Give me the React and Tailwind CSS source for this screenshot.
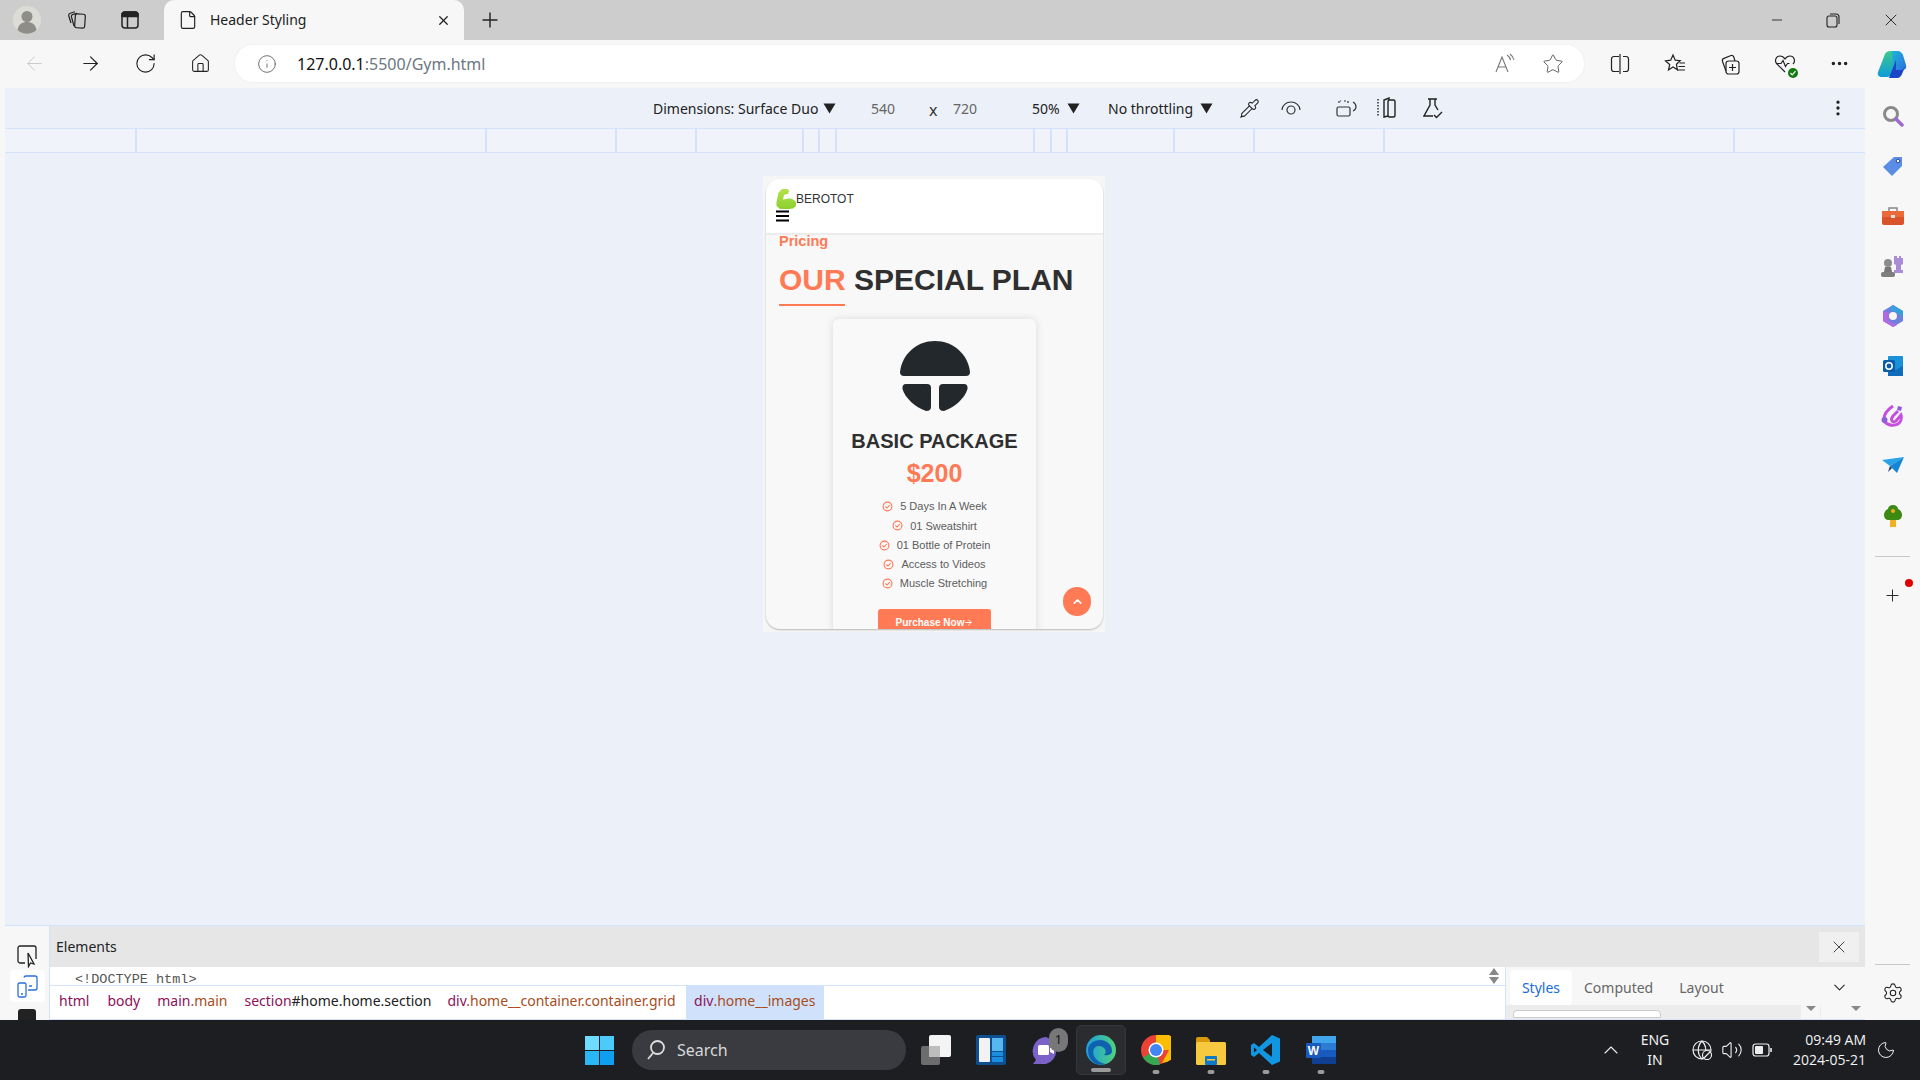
import React from "react";
import { File, X, Plus, ArrowLeft, ArrowRight, RotateCw, Home, Info, Star, MoreHorizontal, MoreVertical, Minus, ChevronDown, ChevronUp, Settings, Moon, Volume2, Pipette } from "lucide-react";

const Tri = ({ className = "" }) => (
  <svg width="13" height="11" viewBox="0 0 13 11" className={`shrink-0 ${className}`}><path d="M0.5 0.5H12.5L6.5 10.5Z" fill="#222" /></svg>
);

function Tabs() {
  return (
    <div className="h-[40px] bg-[#cdcdcd] flex items-end shrink-0">
      <div className="w-[54px] h-[40px] flex items-center justify-center">
        <svg width="28" height="28" viewBox="0 0 28 28"><circle cx="14" cy="14" r="14" fill="#dcdcd6" /><circle cx="14" cy="10.5" r="5.5" fill="#8f8d87" /><path d="M4.5 24c1-6 5-8 9.5-8s8.500 2 9.500 8a14 14 0 0 1-19 0Z" fill="#8f8d87" /></svg>
      </div>
      <div className="w-[46px] h-[40px] flex items-center justify-center">
        <svg width="22" height="22" viewBox="0 0 22 22" fill="none" stroke="#222" strokeWidth="1.2"><rect x="9" y="5" width="10" height="14" rx="2" transform="rotate(4 14 12)" /><path d="M8 17 5.500 8c-.4-1.300.3-2.300 1.500-2.600L11 4.300" /><path d="M5 14 2.800 7c-.4-1.300.2-2.300 1.500-2.700L9 2.800" /></svg>
      </div>
      <div className="w-[60px] h-[40px] flex items-center justify-center">
        <svg width="20" height="20" viewBox="0 0 20 20" fill="none" stroke="#222" strokeWidth="1.500"><rect x="2" y="2" width="16" height="16" rx="3" /><path d="M2 6.500V5a3 3 0 0 1 3-3h10a3 3 0 0 1 3 3v1.500Z" fill="#222" /><path d="M7.500 6v12" /></svg>
      </div>
      <div className="ml-[4px] w-[300px] h-[40px] bg-[#f7f7f7] rounded-t-[10px] flex items-center pl-[14px]">
        <File size={20} strokeWidth={1.4} color="#222" />
        <span className="ml-[12px] pb-[2px] text-[14px] text-[#222] font-['Noto_Sans',sans-serif]">Header Styling</span>
        <X size={15} strokeWidth={2} color="#222" className="ml-auto mr-[13px]" />
      </div>
      <div className="ml-[14px] w-[24px] h-[40px] flex items-center justify-center"><Plus size={24} strokeWidth={1.4} color="#222" /></div>
      <div className="ml-auto h-[40px] flex items-center">
        <Minus size={16} strokeWidth={1.3} color="#222" />
        <div className="ml-[40px]"><svg width="16" height="16" viewBox="0 0 16 16" fill="none" stroke="#222" strokeWidth="1.100"><rect x="2" y="4" width="10" height="11" rx="2" /><path d="M5 2h6a3 3 0 0 1 3 3v7" /></svg></div>
        <X size={20} strokeWidth={1.1} color="#222" className="ml-[40px] mr-[19px]" />
      </div>
    </div>
  );
}

function Toolbar() {
  return (
    <div className="h-[48px] bg-[#f7f7f7] flex items-center shrink-0 pb-[1px]">
      <div className="w-[235px] flex items-center pl-[23px] gap-[32.500px]">
        <ArrowLeft size={23} strokeWidth={1} color="#c8c8c8" />
        <ArrowRight size={23} strokeWidth={1.200} color="#222" />
        <RotateCw size={23} strokeWidth={1.200} color="#222" />
        <Home size={21} strokeWidth={1.200} color="#222" />
      </div>
      <div className="w-[1349px] h-[37px] bg-white rounded-[18px] flex items-center pl-[22px] shadow-[0_0_3px_rgba(0,0,0,0.06)]">
        <Info size={20} strokeWidth={1} color="#555" />
        <span className="ml-[20px] pt-[1px] text-[16px] font-['Noto_Sans',sans-serif] text-[#111]">127.0.0.1<span className="text-[#6c7784]">:5500/Gym.html</span></span>
        <div className="ml-auto mr-[20px] flex items-center gap-[26px]">
          <svg width="22" height="22" viewBox="0 0 22 22" fill="none" stroke="#777" strokeWidth="1.100"><path d="M2 19 8 4l6 15M4.200 14h7.800" /><path d="M13 2c2 1 3 3 3.500 5M16 1c2 1.500 3.500 3.500 4 6" /></svg>
          <Star size={22} strokeWidth={1} color="#555" />
        </div>
      </div>
      <div className="ml-[25px] flex items-center gap-[33px]">
        <svg width="22" height="22" viewBox="0 0 22 22" fill="none" stroke="#222" strokeWidth="1.200"><path d="M10 3.500H5a2.500 2.500 0 0 0-2.500 2.500v10A2.500 2.500 0 0 0 5 18.500h5M14 3.500h3A2.500 2.500 0 0 1 19.500 6v10a2.500 2.500 0 0 1-2.500 2.500h-3" /><path d="M11 1v20" /></svg>
        <svg width="22" height="22" viewBox="0 0 22 22" fill="none" stroke="#222" strokeWidth="1.200"><path d="M9 2l2.200 5.200 5 .5-3.800 3.500 1 5.500L9 14l-4.500 3 1.200-5.500L1.500 8l5.200-.8Z" /><path d="M15.500 10H21M14.500 13.500H21M13 17H21" /></svg>
        <svg width="22" height="22" viewBox="0 0 22 22" fill="none" stroke="#222" strokeWidth="1.200"><rect x="7" y="8" width="13" height="13" rx="2.500" /><path d="M13.500 11v7M10 14.500h7" /><path d="M7 18 3.500 8.500c-.5-1.500 0-2.600 1.500-3.100L12 2.500c1.300-.3 2.300.3 2.800 1.500L16 8" /></svg>
        <div className="relative w-[22px] h-[22px]">
          <svg width="22" height="22" viewBox="0 0 22 22" fill="none" stroke="#222" strokeWidth="1.200"><path d="M11 19 3 11C0 8 2 3 6 3c2.500 0 4 1.500 5 3 1-1.500 2.500-3 5-3 4 0 6 5 3 8" /><path d="M2 10.500h5l2-3 2.500 6 2-3h2" /></svg>
          <span className="absolute right-[-2px] bottom-[-3px] w-[10px] h-[10px] rounded-full bg-[#107c10] flex items-center justify-center"><svg width="8" height="8" viewBox="0 0 8 8" fill="none" stroke="#fff" strokeWidth="1.200"><path d="M1.500 4 3.300 5.800 6.500 2.200" /></svg></span>
        </div>
        <MoreHorizontal size={21} strokeWidth={2} color="#222" />
      </div>
      <div className="ml-[25px]">
        <svg width="32" height="32" viewBox="0 0 32 32"><defs><linearGradient id="cpa" x1="0" y1="0" x2="1" y2="1"><stop offset="0" stopColor="#1bb4d8" /><stop offset="1" stopColor="#2f6fe0" /></linearGradient><linearGradient id="cpb" x1="0" y1="0" x2="0" y2="1"><stop offset="0" stopColor="#3cc98f" /><stop offset="1" stopColor="#0f9bd8" /></linearGradient></defs><path d="M10 6c1-2 3-3 5-3h6c3 0 4 2 3 5l-7 18c-1 2-3 3-5 3H7c-3 0-5-2-4-5Z" fill="url(#cpb)" /><path d="M17 3h6c2 0 4 2 5 4l3 10c1 3-1 5-4 5h-6l-3-9Z" fill="url(#cpa)" /><path d="M21 12 14 30h8c3 0 4-2 5-4l3-7-3 3h-6Z" fill="#1d45c8" /></svg>
      </div>
    </div>
  );
}

function DeviceBar() {
  return (
    <div className="h-[40px] bg-[#ecf0f8] flex items-center text-[14px] text-[#222] font-['Noto_Sans',sans-serif] shrink-0">
      <span className="ml-[648px] w-[170px] whitespace-nowrap">Dimensions: Surface Duo</span>
      <Tri />
      <span className="ml-[35px] w-[24px] text-[#666]">540</span>
      <span className="ml-[34px] w-[14px] pt-[3px] text-[#333] text-[16px]">x</span>
      <span className="ml-[10px] w-[24px] text-[#666]">720</span>
      <span className="ml-[55px] w-[31px]">50%</span>
      <Tri className="ml-[4px]" />
      <span className="ml-[28px] w-[88px] whitespace-nowrap">No throttling</span>
      <Tri className="ml-[4px]" />
      <Pipette size={21} strokeWidth={1.200} color="#222" className="ml-[26px]" />
      <svg width="20" height="16" viewBox="0 0 20 16" fill="none" stroke="#333" strokeWidth="1.200" className="ml-[21px]"><path d="M1 10a9 8 0 0 1 18 0" /><ellipse cx="10" cy="10" rx="4" ry="4" /></svg>
      <svg width="22" height="20" viewBox="0 0 22 20" fill="none" stroke="#333" strokeWidth="1.200" className="ml-[35px]"><rect x="1" y="9" width="13" height="9" rx="1.500" /><path d="M3 5V3h2M8 3h2M12 3v3" strokeDasharray="2 1" /><path d="M17 4c2 1 3 3 3 5s-1 3-3 4" /></svg>
      <svg width="20" height="22" viewBox="0 0 20 22" fill="none" stroke="#222" strokeWidth="1.400" className="ml-[19px]"><path d="M1 2v18" strokeDasharray="1.500 1.500" /><rect x="11" y="3" width="7" height="17" rx="1.500" /><path d="M11 19 7 20V3l5-2v2" /></svg>
      <svg width="20" height="22" viewBox="0 0 20 22" fill="none" stroke="#222" strokeWidth="1.400" className="ml-[26px]"><path d="M5 2h9M7 2v6L1 19h9M12 2v6l3 5" /><path d="M11 18l2.500 2.500L19 15" /></svg>
      <MoreVertical size={20} strokeWidth={2} color="#222" className="ml-[385px]" />
    </div>
  );
}

function Ruler() {
  const seg = "h-full border-r-2 border-[#d3e3fb] shrink-0";
  return (
    <div className="h-[25px] bg-[#f0f4fa] border-y border-[#d3e3fb] flex shrink-0">
      <div className={`${seg} w-[132px]`} />
      <div className={`${seg} w-[350px]`} />
      <div className={`${seg} w-[130px]`} />
      <div className={`${seg} w-[80px]`} />
      <div className={`${seg} w-[107px]`} />
      <div className={`${seg} w-[16px]`} />
      <div className={`${seg} w-[17px]`} />
      <div className={`${seg} w-[198px]`} />
      <div className={`${seg} w-[17px]`} />
      <div className={`${seg} w-[16px]`} />
      <div className={`${seg} w-[107px]`} />
      <div className={`${seg} w-[80px]`} />
      <div className={`${seg} w-[130px]`} />
      <div className={`${seg} w-[350px]`} />
    </div>
  );
}

const features = [
  "5 Days In A Week",
  "01 Sweatshirt",
  "01 Bottle of Protein",
  "Access to Videos",
  "Muscle Stretching",
];

function Phone() {
  return (
    <div className="w-[342px] h-[456px] ml-[758px] mt-[23px] bg-[#f6f6f6] p-[3px] font-['Liberation_Sans',sans-serif]">
      <div className="relative w-[337px] h-[450px] rounded-[14px] bg-[#f8f8f8] overflow-hidden shadow-[0_1px_2px_rgba(0,0,0,0.25)]">
        <header className="h-[56px] bg-white border-b-2 border-[#ececec] pl-[10px] pt-[10px]">
          <div className="flex items-start">
            <svg width="20" height="20" viewBox="0 0 20 20" className="shrink-0"><defs><linearGradient id="lg" x1="0" y1="0" x2="0" y2="1"><stop offset="0" stopColor="#b6e04c" /><stop offset="1" stopColor="#8bd12f" /></linearGradient></defs><path d="M0.500 13 2.500 3.500 6 0h5.500l1.500 1.500-.5 3L8 6 7 10.500 13 9.500c3 0 7 2 7 4.500v3l-3 2.500-4 .5H4l-3.500-3Z" fill="url(#lg)" /></svg>
            <span className="text-[12px] leading-[14px] mt-[3px] text-[#333]">BEROTOT</span>
          </div>
          <svg width="13" height="12" viewBox="0 0 13 12" className="mt-[1px] block"><path d="M0 1.500H13M0 6H13M0 10.500H13" stroke="#000" strokeWidth="1.800" /></svg>
        </header>
        <div className="pl-[13px]">
          <p className="text-[14.500px] leading-[14px] -mt-[1px] font-bold text-[#ff7a55]">Pricing</p>
          <h2 className="mt-[15px] text-[30px] leading-[34px] font-bold text-[#2f2f2f] whitespace-nowrap"><span className="text-[#ff7a55]">OUR</span> SPECIAL PLAN</h2>
          <div className="mt-[7px] w-[66px] h-[2px] bg-[#ff7a55]" />
        </div>
        <div className="mt-[13px] ml-[67px] w-[203px] h-[400px] bg-[#f9f9f9] rounded-[6px] shadow-[0_0_8px_rgba(0,0,0,0.12)] pt-[22px] flex flex-col items-center">
          <svg width="70" height="71" viewBox="0 0 70 71" fill="#23282c" className="shrink-0">
            <path d="M4 35Q0 35 0 31C2 13 17 0 35 0S68 13 70 31Q70 35 66 35Z" />
            <path d="M6 43H27Q31 43 31 47V66Q31 70 26 70C15 66 5 57 2.500 48Q2 43 6 43Z" />
            <path d="M64 43H43Q39 43 39 47V66Q39 70 44 70C55 66 65 57 67.500 48Q68 43 64 43Z" />
          </svg>
          <h3 className="mt-[17px] text-[20px] leading-[24px] font-bold text-[#2f2f2f]">BASIC PACKAGE</h3>
          <p className="mt-[5px] text-[25px] leading-[30px] font-bold text-[#ff7a55]">$200</p>
          <ul className="mt-[9px] flex flex-col items-center">
            {features.map((f) => (
              <li key={f} className="h-[19.250px] flex items-center gap-[5px] text-[11px] text-[#5c5c5c]">
                <svg width="11" height="11" viewBox="0 0 11 11" fill="none" stroke="#ff7a55" strokeWidth="1.100" className="shrink-0"><circle cx="5.500" cy="5.500" r="4.400" /><path d="M3.400 5.500 5 7 7.700 4" /></svg>
                <span className="ml-[2px]">{f}</span>
              </li>
            ))}
          </ul>
          <button className="mt-[16px] w-[113px] h-[30px] bg-[#ff7a55] rounded-[3px] text-white text-[10px] font-bold flex items-center justify-center pb-[4px]">
            Purchase Now
            <ArrowRight size={9} strokeWidth={2.500} color="#fff" />
          </button>
        </div>
        <button className="absolute left-[297px] top-[408px] w-[28px] h-[29px] rounded-full bg-[#ff7a55] flex items-center justify-center">
          <ChevronUp size={13} strokeWidth={3} color="#fff" />
        </button>
      </div>
    </div>
  );
}

function DevTools() {
  return (
    <div className="h-[95px] border-t border-[#d3e3fb] bg-white flex shrink-0 font-['Noto_Sans',sans-serif]">
      <div className="w-[45px] bg-[#f7f7f7] border-r border-[#d3e3fb] shrink-0 overflow-hidden pt-[18px] flex flex-col items-center">
        <svg width="22" height="24" viewBox="0 0 22 24" fill="none" stroke="#222" strokeWidth="1.300" className="shrink-0"><path d="M9 19H4a2 2 0 0 1-2-2V4a2 2 0 0 1 2-2h14a2 2 0 0 1 2 2v11" /><path d="M12 9l6 11-3.500-1-2 3.500Z" /></svg>
        <div className="mt-[2px] w-[35px] h-[32px] bg-white rounded-[4px] flex items-center justify-center shrink-0">
          <svg width="22" height="24" viewBox="0 0 22 24" fill="none" stroke="#2a6fdb" strokeWidth="1.300" className="shrink-0"><path d="M8 3.500A2 2 0 0 1 10 2h9a2 2 0 0 1 2 2v10a2 2 0 0 1-2 2H12" /><rect x="2" y="9" width="8" height="14" rx="1.500" /><path d="M5 20h2M13 12h3" /></svg>
        </div>
        <div className="mt-[7px] w-[18px] h-[18px] bg-[#222] rounded-[3px] shrink-0" />
      </div>
      <div className="flex-1 flex flex-col min-w-0">
        <div className="h-[41px] bg-[#e6e6e6] flex items-center pl-[6px] shrink-0">
          <span className="text-[14px] text-[#222]">Elements</span>
          <div className="ml-auto mr-[6px] w-[40px] h-[30px] bg-[#f0f0f0] flex items-center justify-center"><X size={20} strokeWidth={1.100} color="#333" /></div>
        </div>
        <div className="flex flex-1 min-h-0">
          <div className="w-[1455px] flex flex-col bg-white border-b border-[#d3e3fb] shrink-0">
            <div className="h-[19px] border-b border-[#d3e3fb] flex items-center pl-[25px] pr-[6px] relative bg-white">
              <span className="text-[13.500px] leading-[19px] pt-[6px] text-[#555] font-['Liberation_Mono',monospace]">&lt;!DOCTYPE html&gt;</span>
              <div className="ml-auto flex flex-col gap-[2px]">
                <svg width="10" height="7" viewBox="0 0 10 7"><path d="M5 0l5 7H0Z" fill="#888" /></svg>
                <svg width="10" height="7" viewBox="0 0 10 7"><path d="M0 0h10L5 7Z" fill="#888" /></svg>
              </div>
            </div>
            <div className="flex-1 flex items-stretch pl-[9px] text-[14px]">
              <span className="self-center pb-[4px] text-[#8e1058]">html</span>
              <span className="self-center pb-[4px] ml-[18px] text-[#8e1058]">body</span>
              <span className="self-center pb-[4px] ml-[17px] text-[#8e1058]">main<span className="text-[#a84d1b]">.main</span></span>
              <span className="self-center pb-[4px] ml-[17px] text-[#8e1058]">section<span className="text-[#222]">#home.home.section</span></span>
              <span className="self-center pb-[4px] ml-[16px] text-[#8e1058]">div<span className="text-[#a84d1b]">.home__container.container.grid</span></span>
              <span className="ml-[10px] px-[8.500px] pb-[4px] bg-[#d0e2fb] flex items-center text-[#8e1058]">div<span className="text-[#a84d1b]">.home__images</span></span>
            </div>
          </div>
          <div className="flex-1 bg-[#f7f7f7] flex flex-col min-w-0 border-l border-[#d3e3fb] border-b">
            <div className="h-[38px] flex items-center pl-[4px] pt-[2px] text-[14px] shrink-0">
              <span className="h-[35px] w-[62px] bg-white rounded-[4px] flex items-center justify-center text-[#1a6cdc]">Styles</span>
              <span className="ml-[12px] text-[#666]">Computed</span>
              <span className="ml-[26px] text-[#666]">Layout</span>
              <ChevronDown size={19} strokeWidth={1.300} color="#222" className="ml-auto mr-[16px]" />
            </div>
            <div className="flex-1 bg-[#ececec] pl-[7px] pt-[5px] overflow-hidden flex">
              <div className="w-[148px] h-[8px] bg-white border border-[#ccc] rounded-t-[4px]" />
              <div className="ml-auto flex -mt-[5px]">
                <div className="w-[19px] bg-[#f7f7f7] flex justify-center"><svg width="10" height="6" viewBox="0 0 10 6"><path d="M0 1h10L5 6Z" fill="#888" /></svg></div>
                <div className="w-[44px] ml-[1px] bg-[#f7f7f7] flex justify-end pr-[4px]"><svg width="10" height="6" viewBox="0 0 10 6"><path d="M0 1h10L5 6Z" fill="#888" /></svg></div>
              </div>
            </div>
          </div>
        </div>
      </div>
    </div>
  );
}

function Sidebar() {
  const row = "h-[50px] flex items-center justify-center shrink-0";
  return (
    <div className="w-[55px] bg-[#f7f7f7] flex flex-col items-center relative shrink-0">
      <div className={`${row} mt-[3px]`}>
        <svg width="22" height="22" viewBox="0 0 22 22" fill="none"><circle cx="9" cy="9" r="6.500" stroke="#8a8a8a" strokeWidth="3" /><path d="M14 14l6 6" stroke="#9a6bd0" strokeWidth="3.500" strokeLinecap="round" /></svg>
      </div>
      <div className={row}>
        <svg width="22" height="22" viewBox="0 0 22 22"><path d="M1 12 12 2h8v9L10 21Z" fill="#5b8de6" /><circle cx="16" cy="6" r="1.800" fill="#fff" stroke="#234a9a" /></svg>
      </div>
      <div className={row}>
        <svg width="22" height="20" viewBox="0 0 22 20"><path d="M7 5V2h8v3" fill="none" stroke="#888" strokeWidth="1.500" /><rect x="0" y="5" width="22" height="14" rx="2" fill="#d9532a" /><rect x="0" y="5" width="22" height="6" fill="#ea6a3a" /><rect x="9" y="9" width="4" height="3" fill="#ddd" /></svg>
      </div>
      <div className={row}>
        <svg width="23" height="22" viewBox="0 0 23 22"><circle cx="7" cy="8" r="4" fill="#8c8c8c" /><path d="M4 12h6l1 5H3Z" fill="#777" /><rect x="0" y="17" width="14" height="5" rx="2" fill="#7f7f7f" /><path d="M14 1h2v2h2V1h2v2h2v6l-2 1v5h2v3H13v-3h2v-5l-2-1V1Z" fill="#a98bd8" /></svg>
      </div>
      <div className={row}>
        <svg width="20" height="22" viewBox="0 0 20 22"><path d="M10 0 20 6v10L10 22 0 16V6Z" fill="#6f7fe0" /><path d="M10 0 20 6v6L14 8 6 4Z" fill="#38a0dc" /><path d="M0 6v10l10 6 4-2-8-4V8Z" fill="#b06be0" /><circle cx="10" cy="11" r="4" fill="#f7f7f7" /></svg>
      </div>
      <div className={row}>
        <svg width="20" height="20" viewBox="0 0 20 20"><rect x="5" y="0" width="15" height="20" rx="1" fill="#1a90d8" /><path d="M5 10 12.500 14 20 10v10H5Z" fill="#0f6cbd" /><rect x="0" y="4" width="12" height="12" rx="1.500" fill="#0a5ca8" /><circle cx="6" cy="10" r="3.200" fill="none" stroke="#fff" strokeWidth="1.500" /></svg>
      </div>
      <div className={row}>
        <svg width="24" height="24" viewBox="0 0 24 24" fill="none"><path d="M12 2C6 6 3 11 3 15c0 5 8 8 14 5 3-2 4-6 3-9l-5 6c-4 2-6-1-3-5l5-5" stroke="#c64fe0" strokeWidth="3" /><circle cx="3.500" cy="16" r="3" fill="#8f5fd6" /><path d="M17 2l4 1-1 4-4-1Z" fill="#8d5be8" /></svg>
      </div>
      <div className={row}>
        <svg width="22" height="18" viewBox="0 0 22 18"><path d="M0 3 22 0 8 9Z" fill="#2aa4e8" /><path d="M22 0 8 9 15 16Z" fill="#1785d4" /><path d="M8 9 6 15 10 11Z" fill="#0e3b6e" /></svg>
      </div>
      <div className={row}>
        <svg width="18" height="22" viewBox="0 0 18 22"><rect x="6" y="14" width="6" height="8" fill="#f0b020" /><path d="M9 0c3 0 5 2 5 4 3 1 4 4 4 6 0 3-2 5-5 5H5c-3 0-5-2-5-5 0-2 1-5 4-6 0-2 2-4 5-4Z" fill="#3c8a12" /><circle cx="9" cy="6" r="2" fill="#f0b020" /></svg>
      </div>
      <div className="w-[35px] h-px bg-[#c8c8c8] mt-[15px]" />
      <Plus size={19} strokeWidth={1.200} color="#222" className="mt-[29px]" />
      <span className="absolute left-[40px] top-[491px] w-[8px] h-[8px] rounded-full bg-[#e00000]" />
      <div className="mt-auto w-[35px] h-px bg-[#c8c8c8]" />
      <Settings size={22} strokeWidth={1.200} color="#222" className="mt-[17px] mb-[16px]" />
    </div>
  );
}

function Taskbar() {
  const dot = "absolute bottom-[6px] left-1/2 -translate-x-1/2 w-[7px] h-[4px] rounded-full bg-[#9a9a9a]";
  return (
    <div className="h-[60px] bg-[#1c1e22] flex items-center relative shrink-0 font-['Noto_Sans',sans-serif] text-white">
      <div className="ml-[585px] w-[29px] h-[29px] grid grid-cols-2 grid-rows-2 gap-[1px] shrink-0">
        <span className="bg-[#6fdcff]" /><span className="bg-[#4ccbfa]" /><span className="bg-[#2bb6f6]" /><span className="bg-[#0f9ef0]" />
      </div>
      <div className="ml-[18px] w-[274px] h-[40px] rounded-[20px] bg-[#3a3b40] flex items-center pl-[14px] shrink-0">
        <svg width="20" height="22" viewBox="0 0 20 22" fill="none" stroke="#ddd" strokeWidth="1.800"><circle cx="11.500" cy="8.500" r="6.500" /><path d="M7 14 2 20" /></svg>
        <span className="ml-[11px] text-[16px] text-[#d8d8d8]">Search</span>
      </div>
      <div className="ml-[2px] flex items-center">
        <div className="w-[55px] h-[60px] flex items-center justify-center">
          <svg width="30" height="30" viewBox="0 0 30 30"><rect x="0" y="11" width="19" height="19" rx="2" fill="#6d6d6d" /><rect x="8" y="0" width="22" height="22" rx="2" fill="#f4f4f4" /><rect x="8" y="11" width="11" height="11" fill="#bdbdbd" /></svg>
        </div>
        <div className="w-[55px] h-[60px] flex items-center justify-center">
          <svg width="30" height="30" viewBox="0 0 30 30"><rect width="30" height="30" rx="2" fill="#0e4f8f" /><rect x="3" y="3" width="11" height="24" rx="1" fill="#f2f2f2" /><rect x="16" y="3" width="11" height="13" fill="#56b8ef" /><rect x="16" y="17" width="11" height="4" fill="#1b8ee0" /><rect x="16" y="22" width="11" height="5" fill="#1b8ee0" /></svg>
        </div>
        <div className="w-[55px] h-[60px] flex items-center justify-center relative">
          <svg width="30" height="32" viewBox="0 0 30 32"><path d="M15 3a14 14 0 0 1 0 27H2l3-4A14 14 0 0 1 15 3Z" fill="#7b62c8" /><rect x="7" y="11" width="11" height="10" rx="1.500" fill="#fff" /><path d="M19 14l4-2v8l-4-2Z" fill="#fff" /></svg>
          <span className="absolute left-[31px] top-[8px] w-[19px] h-[24px] rounded-full bg-[#777] text-[12px] flex items-center justify-center text-[#111]">1</span>
        </div>
        <div className="w-[50px] h-[50px] mx-[2.500px] bg-[#2b2c30] rounded-[5px] border border-[#36373b] flex items-center justify-center relative">
          <svg width="30" height="30" viewBox="0 0 30 30"><defs><linearGradient id="ed" x1="0" y1="0" x2="1" y2="0"><stop offset="0" stopColor="#1b9de2" /><stop offset="1" stopColor="#52d27a" /></linearGradient></defs><circle cx="15" cy="15" r="15" fill="url(#ed)" /><path d="M2 15C2 9 8 5 14 5s12 4 12 11c0 4-5 5-8 4 4-4 0-9-5-9-5 0-7 5-5 10 2 4 6 7 12 8-8 3-18-2-18-14Z" fill="#0f62b0" /></svg>
          <span className="absolute bottom-[2px] left-1/2 -translate-x-1/2 w-[20px] h-[4px] rounded-full bg-[#9a9a9a]" />
        </div>
        <div className="w-[55px] h-[60px] flex items-center justify-center relative">
          <svg width="30" height="30" viewBox="0 0 30 30"><circle cx="15" cy="15" r="15" fill="#ea4335" /><path d="M15 0h13a15 15 0 0 1-7 28L28 15H15Z" fill="#fbbc04" /><path d="M2 22.500 A15 15 0 0 0 19 29.500L15 15Z" fill="#34a853" /><circle cx="15" cy="15" r="7.500" fill="#fff" /><circle cx="15" cy="15" r="6" fill="#4285f4" /></svg>
          <span className={dot} />
        </div>
        <div className="w-[55px] h-[60px] flex items-center justify-center relative">
          <svg width="30" height="30" viewBox="0 0 30 30"><path d="M0 4a2 2 0 0 1 2-2h9l3 3v3H0Z" fill="#d89a0a" /><rect x="0" y="7" width="30" height="23" rx="1.500" fill="#f7c93e" /><rect x="9" y="21" width="12" height="9" rx="1" fill="#0f78c8" /><rect x="11" y="24" width="8" height="1.500" fill="#f7c93e" /></svg>
          <span className={dot} />
        </div>
        <div className="w-[55px] h-[60px] flex items-center justify-center relative">
          <svg width="30" height="30" viewBox="0 0 30 30"><path d="M21 0l8 3.500v23L21 30 8 18 3 22 0 20V10l3-2 5 4Z" fill="#1196e2" /><path d="M21 8v14l-9-7Z" fill="#1c1e22" /><path d="M3 12.500 6 15l-3 2.500Z" fill="#1c1e22" /></svg>
          <span className={dot} />
        </div>
        <div className="w-[55px] h-[60px] flex items-center justify-center relative">
          <svg width="30" height="30" viewBox="0 0 30 30"><rect x="6" y="1" width="24" height="28" rx="1.500" fill="#2b7cd3" /><rect x="6" y="1" width="24" height="7" fill="#41a5ee" /><rect x="6" y="15" width="24" height="7" fill="#185abd" /><rect x="6" y="22" width="24" height="7" fill="#103f91" /><rect x="0" y="8" width="15" height="15" rx="1" fill="#185abd" /><text x="7.500" y="20" fontSize="12" fontWeight="700" fill="#fff" textAnchor="middle" fontFamily="Liberation Sans, sans-serif">W</text></svg>
          <span className={dot} />
        </div>
      </div>
      <div className="ml-auto flex items-center">
        <ChevronUp size={24} strokeWidth={1.100} color="#eee" />
        <div className="ml-[11px] w-[42px] text-[14px] leading-[20px] text-center text-[#f2f2f2]">ENG<br />IN</div>
        <svg width="20" height="20" viewBox="0 0 20 20" fill="none" stroke="#eee" strokeWidth="1.200" className="ml-[16px]"><circle cx="10" cy="10" r="9" /><path d="M1 10h18M10 1c-5 5-5 13 0 18M10 1c5 5 5 13 0 18" /><circle cx="15" cy="15" r="4.500" fill="#1c1e22" /><path d="M12 18l6-6" /></svg>
        <Volume2 size={22} strokeWidth={1.200} color="#eee" className="ml-[9px]" />
        <svg width="20" height="14" viewBox="0 0 20 14" fill="none" stroke="#eee" strokeWidth="1.200" className="ml-[9px]"><rect x="1" y="1" width="16" height="12" rx="2.500" /><rect x="3" y="3" width="8" height="8" rx="1" fill="#eee" stroke="none" /><path d="M19 5v4" strokeWidth="1.600" /></svg>
        <div className="ml-[19px] w-[75px] text-[14px] leading-[20px] text-right text-[#f2f2f2] whitespace-nowrap flex flex-col items-end font-['Open_Sans',sans-serif]">
          <span>09:49 AM</span><span>2024-05-21</span>
        </div>
        <Moon size={20} strokeWidth={1.200} color="#eee" className="ml-[10px] mr-[24px]" />
      </div>
    </div>
  );
}

export default function App() {
  return (
    <div className="w-[1920px] h-[1080px] flex flex-col overflow-hidden bg-[#f7f7f7]">
      <Tabs />
      <Toolbar />
      <div className="flex flex-1 min-h-0">
        <div className="w-[1865px] pl-[5px] flex flex-col min-w-0">
          <DeviceBar />
          <Ruler />
          <div className="flex-1 bg-[#ecf0f8] overflow-hidden min-h-0"><Phone /></div>
          <DevTools />
        </div>
        <Sidebar />
      </div>
      <Taskbar />
    </div>
  );
}
